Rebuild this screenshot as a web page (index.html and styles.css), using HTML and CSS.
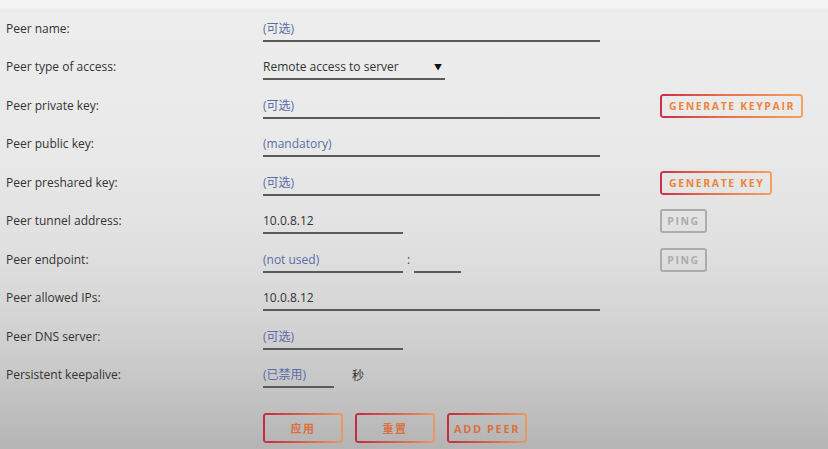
FILE: index.html
```html
<!DOCTYPE html>
<html>
<head>
<meta charset="utf-8">
<link rel="stylesheet" href="styles.css">
</head>
<body>
<div class="topstrip"></div>
<form class="form">
  <div class="row">
    <label class="lbl">Peer name:</label>
    <div class="fields"><span class="field w-full ph">(可选)</span></div>
    <div class="act"></div>
  </div>
  <div class="row">
    <label class="lbl">Peer type of access:</label>
    <div class="fields"><span class="field w-sel val sel"><span>Remote access to server</span><span class="arrow">▼</span></span></div>
    <div class="act"></div>
  </div>
  <div class="row">
    <label class="lbl">Peer private key:</label>
    <div class="fields"><span class="field w-full ph">(可选)</span></div>
    <div class="act"><button type="button" class="btn grad">GENERATE KEYPAIR</button></div>
  </div>
  <div class="row">
    <label class="lbl">Peer public key:</label>
    <div class="fields"><span class="field w-full ph">(mandatory)</span></div>
    <div class="act"></div>
  </div>
  <div class="row">
    <label class="lbl">Peer preshared key:</label>
    <div class="fields"><span class="field w-full ph">(可选)</span></div>
    <div class="act"><button type="button" class="btn grad">GENERATE KEY</button></div>
  </div>
  <div class="row">
    <label class="lbl">Peer tunnel address:</label>
    <div class="fields"><span class="field w-short val">10.0.8.12</span></div>
    <div class="act"><button type="button" class="btn gray">PING</button></div>
  </div>
  <div class="row">
    <label class="lbl">Peer endpoint:</label>
    <div class="fields"><span class="field w-short ph">(not used)</span><span class="colon">:</span><span class="field w-port ph"></span></div>
    <div class="act"><button type="button" class="btn gray">PING</button></div>
  </div>
  <div class="row">
    <label class="lbl">Peer allowed IPs:</label>
    <div class="fields"><span class="field w-full val">10.0.8.12</span></div>
    <div class="act"></div>
  </div>
  <div class="row">
    <label class="lbl">Peer DNS server:</label>
    <div class="fields"><span class="field w-short ph">(可选)</span></div>
    <div class="act"></div>
  </div>
  <div class="row">
    <label class="lbl">Persistent keepalive:</label>
    <div class="fields"><span class="field w-keep ph">(已禁用)</span><span class="unit">秒</span></div>
    <div class="act"></div>
  </div>
  <div class="actions">
    <button type="button" class="btn grad big">应用</button>
    <button type="button" class="btn grad big">重置</button>
    <button type="button" class="btn grad big">ADD PEER</button>
  </div>
</form>
</body>
</html>
```
FILE: styles.css
```css
html, body {
  margin: 0;
  padding: 0;
}
body {
  width: 828px;
  height: 449px;
  overflow: hidden;
  font-family: "Open Sans", "Noto Sans CJK SC", sans-serif;
  font-size: 12px;
  color: #333;
  background: linear-gradient(180deg, #f4f4f4 0px, #f4f4f4 8px, #ededed 9px, #e9e9e9 150px, #e0e0e0 250px, #d2d2d2 330px, #c2c2c2 400px, #b4b4b4 449px);
}
.topstrip {
  height: 9.5px;
}
.form {
  padding-left: 6px;
}
.row {
  display: grid;
  grid-template-columns: 257px 397px auto;
  height: 38.5px;
  align-items: center;
}
.lbl {
  line-height: 16px;
  color: #333;
}
.fields {
  display: flex;
  align-items: center;
}
.field {
  display: flex;
  align-items: center;
  box-sizing: border-box;
  height: 26px;
  padding: 5px 0 3px 0;
  line-height: 16px;
  border-bottom: 2px solid #5a5a5a;
}
.ph { color: #5a6ea6; }
.val { color: #333; }
.w-full { width: 337px; }
.w-sel { width: 182px; justify-content: space-between; padding-right: 3px; }
.w-short { width: 140px; }
.w-port { width: 47px; }
.w-keep { width: 71px; }
.arrow { font-size: 8px; color: #111; }
.colon {
  width: 11px;
  text-align: center;
  color: #444;
}
.unit {
  margin-left: 18px;
  color: #333;
}
.act {
  display: flex;
  align-items: center;
  padding-left: 0;
}
.btn {
  position: relative;
  box-sizing: border-box;
  height: 24px;
  padding: 0 6px;
  font-family: "Open Sans", "Noto Sans CJK SC", sans-serif;
  font-size: 10.5px;
  font-weight: 700;
  letter-spacing: 1.6px;
  background: transparent;
  border-radius: 3px;
  cursor: pointer;
}
.grad {
  border: none;
  color: #ec8440;
}
.grad::before {
  content: "";
  position: absolute;
  inset: 0;
  border-radius: 3px;
  padding: 2px;
  background: linear-gradient(90deg, #cd2e48, #e8704a 45%, #f2a064);
  -webkit-mask: linear-gradient(#000 0 0) content-box, linear-gradient(#000 0 0);
  -webkit-mask-composite: xor;
  mask-composite: exclude;
}
.gray {
  border: 2px solid #acacac;
  color: #acacac;
  width: 47px;
  padding: 0;
}
.act .grad { padding: 0 8px 0 9px; }
.actions {
  display: flex;
  gap: 12px;
  padding-left: 257px;
  margin-top: 18.5px;
}
.big {
  width: 80px;
  height: 30px;
  padding: 0;
  color: #d9703e;
  font-size: 11px;
}
.big::before {
  background: linear-gradient(90deg, #c42a40, #d86048 50%, #e89a62);
}
```
